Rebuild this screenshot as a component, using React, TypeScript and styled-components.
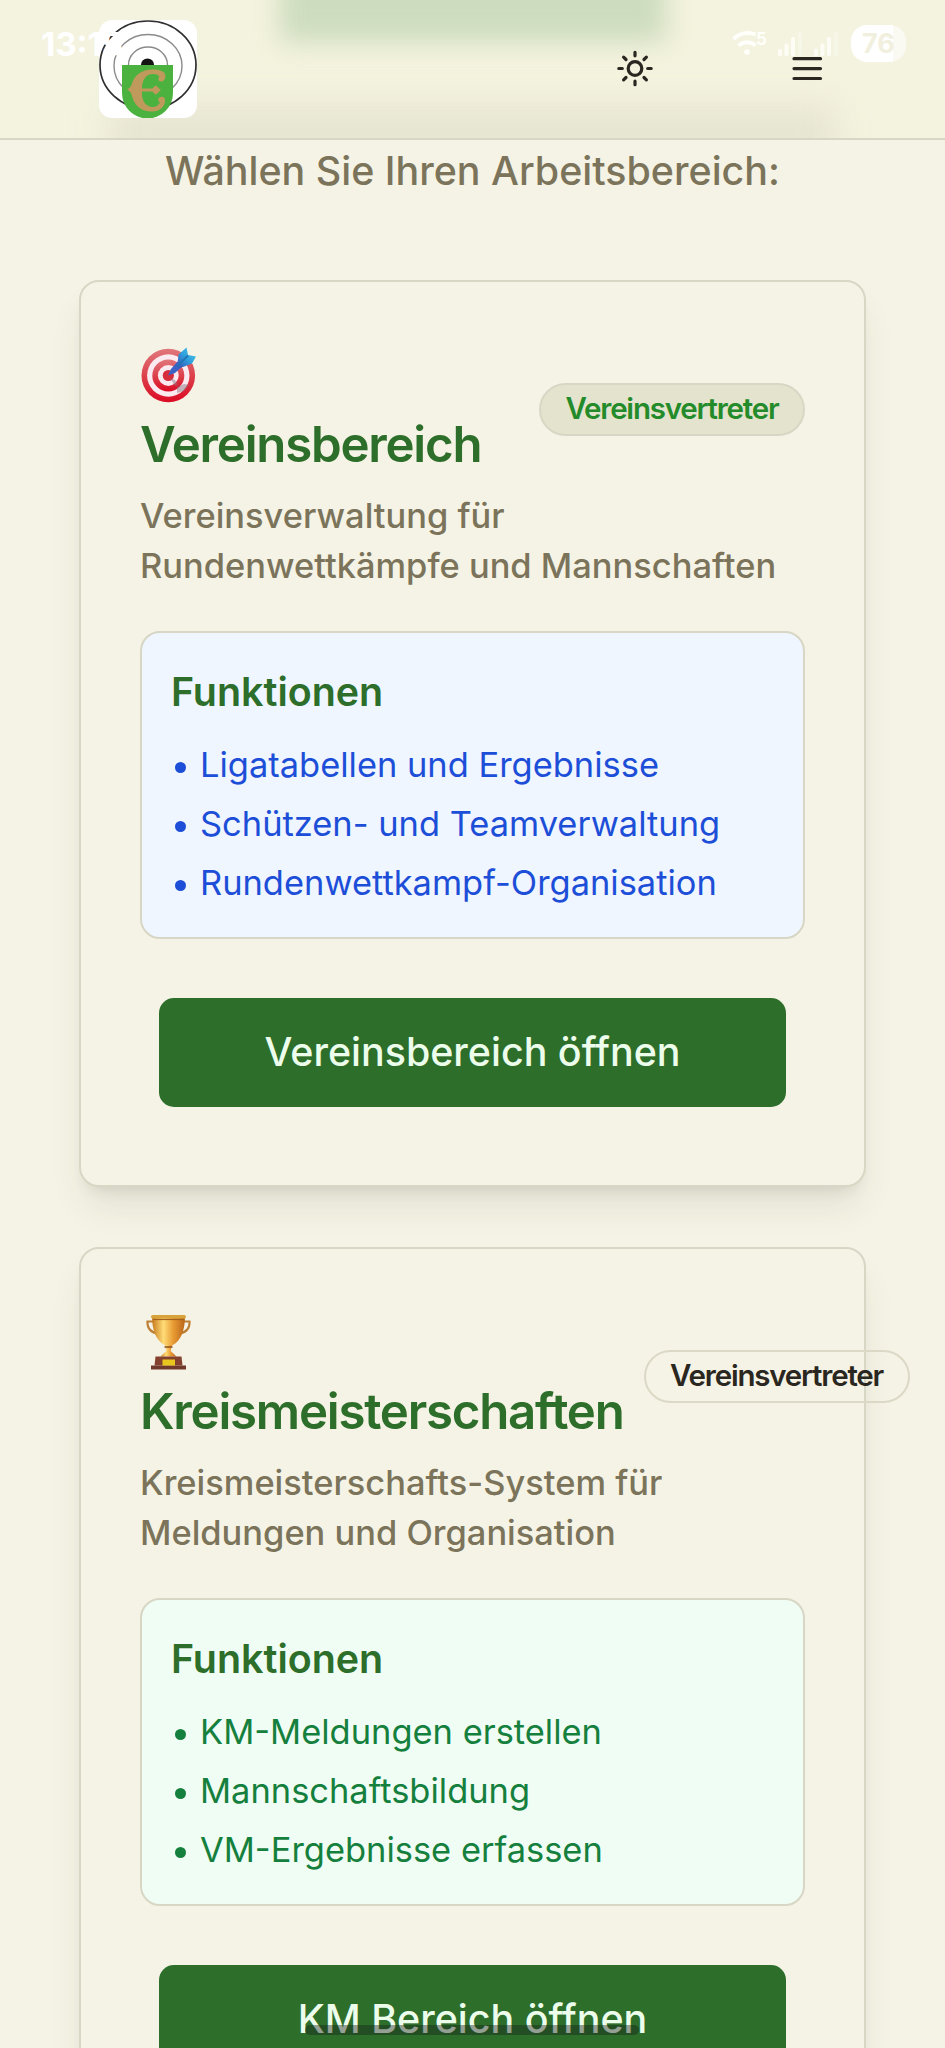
import React from "react";
import styled, { createGlobalStyle } from "styled-components";

const Global = createGlobalStyle`
  * { box-sizing: border-box; }
  html, body { margin: 0; padding: 0; }
  body {
    background: #f5f3e5;
    font-family: Inter, "Liberation Sans", sans-serif;
    font-optical-sizing: none;
    height: 2048px;
    overflow: hidden;
  }
  h2, h3, p, ul { margin: 0; padding: 0; }
`;

const Screen = styled.div`
  position: relative;
  width: 945px;
  height: 2048px;
  overflow: hidden;
  background: #f5f3e5;
`;

const Header = styled.header`
  position: relative;
  height: 140px;
  overflow: hidden;
  border-bottom: 2px solid #d8d6c4;
  background: #f4f3df;
  display: flex;
  align-items: flex-start;
  padding: 20px 118px 0 99px;
`;

const Haze = styled.div<{ $x: number; $y: number; $w: number; $h: number; $c: string; $blur: number }>`
  position: absolute;
  left: ${(p) => p.$x}px;
  top: ${(p) => p.$y}px;
  width: ${(p) => p.$w}px;
  height: ${(p) => p.$h}px;
  background: ${(p) => p.$c};
  filter: blur(${(p) => p.$blur}px);
`;

const Logo = styled.svg`
  position: relative;
  width: 98px;
  height: 98px;
  flex: none;
`;

const Actions = styled.nav`
  position: relative;
  margin-left: auto;
  display: flex;
  gap: 132px;
  padding-top: 28px;
`;

const IconButton = styled.button`
  width: 40px;
  height: 40px;
  padding: 0;
  border: 0;
  background: none;
  color: #292720;
  svg { display: block; }
`;

const StatusBar = styled.div`
  position: absolute;
  z-index: 2;
  top: 0;
  left: 0;
  width: 945px;
  padding: 25px 39px 0 41px;
  display: flex;
  justify-content: space-between;
  color: #fff;
`;

const Clock = styled.span`
  margin-top: -1px;
  font-size: 33px;
  line-height: 40px;
  font-weight: 700;
`;

const StatusIcons = styled.div`
  display: flex;
  align-items: flex-start;
`;

const Signals = styled.div`
  display: flex;
  gap: 12px;
`;

const Battery = styled.span`
  width: 55px;
  height: 37px;
  margin-left: 13px;
  border-radius: 16px;
  background: linear-gradient(90deg, #fff 76%, #fbfaf2 76%);
  color: #f1f0de;
  font-size: 27px;
  line-height: 38px;
  font-weight: 700;
  text-align: center;
`;

const Intro = styled.p`
  margin-top: 3px;
  height: 56px;
  line-height: 56px;
  text-align: center;
  font-size: 39.4px;
  font-weight: 500;
  color: #7b745b;
`;

const Main = styled.main`
  padding: 81px 79px 0;
  display: flex;
  flex-direction: column;
  gap: 60px;
`;

const Card = styled.section`
  flex: none;
  height: 907px;
  border: 2px solid #d8d6c4;
  border-radius: 20px;
  background: #f5f3e5;
  padding: 59px 59px 0;
  box-shadow: 0 24px 36px -7px rgba(60, 56, 40, 0.1), 0 10px 15px -9px rgba(60, 56, 40, 0.14);
`;

const CardHead = styled.div`
  display: flex;
  align-items: center;
  justify-content: space-between;
  gap: 20px;
  height: 137px;
`;

const Title = styled.h2`
  color: #2c6e2a;
  font-size: 49.2px;
  line-height: 68px;
  font-weight: 600;
  letter-spacing: -0.025em;
  height: 137px;
  svg { display: block; margin: 6px 0 7px 1px; }
`;

const Badge = styled.span<{ $filled?: boolean }>`
  flex: none;
  height: 53px;
  width: 266px;
  border: 2px solid ${(p) => (p.$filled ? "#d8d6c4" : "#dbd8c6")};
  border-radius: 27px;
  background: ${(p) => (p.$filled ? "#e4e3cd" : "transparent")};
  color: ${(p) => (p.$filled ? "#238b2a" : "#292720")};
  font-size: 29.5px;
  line-height: 47px;
  font-weight: 600;
  letter-spacing: -0.041em;
  text-align: center;
`;

const Description = styled.p`
  margin-top: 13px;
  font-size: 34.45px;
  line-height: 50px;
  font-weight: 500;
  color: #7b745b;
`;

const Features = styled.div<{ $tone: "blue" | "green" }>`
  margin-top: 40px;
  height: 308px;
  border: 2px solid #d8d6c4;
  border-radius: 20px;
  padding: 29px 29px;
  background: ${(p) => (p.$tone === "blue" ? "#eff6ff" : "#f0fdf4")};
  color: ${(p) => (p.$tone === "blue" ? "#1d4ed8" : "#15803d")};
`;

const FeaturesTitle = styled.h3`
  font-size: 39.4px;
  line-height: 60px;
  font-weight: 600;
  color: #2c6e2a;
`;

const List = styled.ul`
  list-style: none;
  margin-top: 13px;
`;

const Item = styled.li`
  display: flex;
  align-items: center;
  height: 59px;
  font-size: 34.45px;
  line-height: 59px;
  font-weight: 400;
  white-space: nowrap;
  &::before {
    content: "";
    width: 11px;
    height: 11px;
    margin: 6px 14px 0 4px;
    border-radius: 50%;
    background: currentColor;
  }
`;

const OpenButton = styled.button`
  display: block;
  width: 627px;
  height: 109px;
  margin: 59px auto 0;
  border: 0;
  border-radius: 15px;
  background: #2c6e2a;
  color: #ecfdec;
  font: 500 39.4px/109px Inter, "Liberation Sans", sans-serif;
  padding: 0;
`;

const HomeIndicator = styled.div`
  position: absolute;
  left: 305px;
  top: 2025px;
  width: 334px;
  height: 10px;
  border-radius: 5px;
  background: rgba(25, 30, 25, 0.42);
`;

const TargetIcon = () => (
  <svg width="56" height="56" viewBox="0 0 56 56">
    <defs>
      <linearGradient id="tRed" x1="0" y1="0" x2="0" y2="1">
        <stop offset="0" stopColor="#e0777b" />
        <stop offset=".55" stopColor="#dc3c48" />
        <stop offset="1" stopColor="#dc0a24" />
      </linearGradient>
      <linearGradient id="tDart" x1="1" y1="0" x2="0" y2="1">
        <stop offset="0" stopColor="#45d0ea" />
        <stop offset=".55" stopColor="#2f9bdc" />
        <stop offset="1" stopColor="#3a50b4" />
      </linearGradient>
    </defs>
    <circle cx="27.3" cy="28.500" r="26.800" fill="url(#tRed)" />
    <circle cx="27.3" cy="28.500" r="21.200" fill="#fbeaf0" />
    <circle cx="27.3" cy="28.500" r="16" fill="url(#tRed)" />
    <circle cx="27.3" cy="28.500" r="10.400" fill="#fbeaf0" />
    <circle cx="27.3" cy="28.500" r="5.600" fill="#d62c3c" />
    <path d="M29 31l5 2 3 5-3 1zM36 40l7-3 5 1-5 6-7 2z" fill="#8b7680" opacity=".5" />
    <path d="M27 28.500L30 22l8-9 5 5-9 8z" fill="#3b62c4" />
    <path d="M36.500 17L37.500 7.500 45.500 .5l1.500 7.500 8 1.500-4 7-9 3.500-4.500.5z" fill="url(#tDart)" />
    <path d="M36 19.500L47 8.500" stroke="#2176b4" strokeWidth="1.800" />
  </svg>
);

const TrophyIcon = () => (
  <svg width="56" height="56" viewBox="0 0 56 56">
    <defs>
      <linearGradient id="cup" x1="0" y1="0" x2="1" y2="0">
        <stop offset="0" stopColor="#c77a1c" />
        <stop offset=".35" stopColor="#ffdc78" />
        <stop offset=".65" stopColor="#e89a32" />
        <stop offset="1" stopColor="#b9661a" />
      </linearGradient>
    </defs>
    <path d="M13 7.500H6.500C6 15 11 19 17 19.500M41 7.500h7.500C49 15 44 19 38 19.500" fill="none" stroke="#bd7e35" strokeWidth="2.200" />
    <path d="M11 2h33c0 13-3.500 25-13 29.500h-6.500C14.500 27 11 15 11 2z" fill="url(#cup)" />
    <rect x="10" y="1" width="35" height="3.600" rx="1.800" fill="#d9a33c" />
    <path d="M12 5.500h31" stroke="#a2621c" strokeWidth="1.200" />
    <path d="M24 31h7l-1.300 6 5.800 5.500H19.500l5.800-5.500z" fill="url(#cup)" />
    <path d="M23.500 33h8" stroke="#8d4d18" strokeWidth="1.500" />
    <path d="M14.500 42.500h26l1 9h-28z" fill="#84422e" />
    <path d="M10 51.500h35v4H10z" fill="#71392b" />
    <rect x="21.500" y="45.500" width="12.500" height="6" fill="#e9c61e" />
  </svg>
);

const LogoMark = () => (
  <Logo viewBox="0 0 98 98">
    <rect width="98" height="98" rx="13" fill="#fff" />
    <ellipse cx="49" cy="45" rx="48" ry="44" fill="none" stroke="#303030" strokeWidth="1.700" />
    <ellipse cx="49" cy="46" rx="34" ry="31.500" fill="none" stroke="#8b8b8b" strokeWidth="1.400" />
    <ellipse cx="49" cy="45" rx="19.500" ry="18" fill="none" stroke="#8b8b8b" strokeWidth="1.400" />
    <circle cx="48.500" cy="45" r="6.600" fill="#141414" />
    <path d="M23 45h51v28a25.500 25.500 0 0 1-51 0z" fill="#4bb13f" />
    <path
      d="M66 54c-1-3-6-4.500-12-4.500-12 0-19 6-21.500 15.500-1 2-2.500 3.500-4.500 4.500 2.500 1 4 3 4.800 5.500C35 85.500 42 91.500 53 91.500c8 0 13-5 13-11 0-3-2-4.500-4.500-3.500-3 1-3 4-.5 5.500-2 3.500-5 5-8.500 4.500-7-1-10-8-9.500-15.500h10c1.500 0 2 3 4 3 1.500-.5 2.500-3 5-4.500-2.500-1.500-3.500-4-5-4.500-2 0-2.500 3-4 3H43c0-8 3.500-14 10-14.500 4-.3 6.500 1 7.500 3-2 1.500-1.500 4 1 4.500 3 .6 6-3 4.500-7z"
      fill="#c09a5c"
    />
  </Logo>
);

const SunIcon = () => (
  <svg width="40" height="40" viewBox="0 0 40 40" fill="none" stroke="currentColor" strokeWidth="3.200" strokeLinecap="round">
    <circle cx="20" cy="20.500" r="6.800" />
    <path d="M20 4.300v3.500M20 33.200v3.500M3.800 20.500h3.500M32.700 20.500h3.500M8.600 9.100l2.400 2.400M29 29.500l2.400 2.400M8.600 31.900l2.400-2.400M29 11.500l2.400-2.400" />
  </svg>
);

const MenuIcon = () => (
  <svg width="40" height="40" viewBox="0 0 40 40" stroke="currentColor" strokeWidth="3.200" strokeLinecap="round">
    <path d="M7 10.700h26.500M7 20.600h26.500M7 30.500h26.500" />
  </svg>
);

const WifiIcon = () => (
  <svg width="46" height="32" viewBox="0 0 46 32" fill="none" stroke="#fffffb">
    <path d="M1.500 14a20 20 0 0 1 22-4.500M6.500 20.500a12.500 12.500 0 0 1 17 0" strokeWidth="4" />
    <circle cx="15" cy="27" r="2.800" fill="#fffffb" stroke="none" />
    <text x="24" y="19.500" fontSize="17" fontWeight="700" fill="#fffffb" stroke="none">5</text>
  </svg>
);

const SignalIcon = () => (
  <svg width="24" height="32" viewBox="0 0 24 32" fill="#fdfdf6">
    <rect x="0" y="24" width="4" height="7" rx="1.500" />
    <rect x="6.500" y="18.500" width="4" height="12.500" rx="1.500" />
    <rect x="13" y="12" width="4" height="19" rx="1.500" />
    <rect x="20" y="7" width="4" height="24" rx="1.500" opacity=".4" />
  </svg>
);

interface AreaProps {
  icon: React.ReactNode;
  title: string;
  lines: string[];
  tone: "blue" | "green";
  features: string[];
  action: string;
  filled?: boolean;
}

const AreaCard = ({ icon, title, lines, tone, features, action, filled }: AreaProps) => (
  <Card>
    <CardHead>
      <Title>
        {icon}
        {title}
      </Title>
      <Badge $filled={filled}>Vereinsvertreter</Badge>
    </CardHead>
    <Description>
      {lines[0]}
      <br />
      {lines[1]}
    </Description>
    <Features $tone={tone}>
      <FeaturesTitle>Funktionen</FeaturesTitle>
      <List>
        {features.map((f) => (
          <Item key={f}>{f}</Item>
        ))}
      </List>
    </Features>
    <OpenButton>{action}</OpenButton>
  </Card>
);

export default function App() {
  return (
    <Screen>
      <Global />
      <Header>
        <Haze $x={280} $y={-40} $w={386} $h={82} $c="#cddcbe" $blur={13} />
        <Haze $x={110} $y={106} $w={725} $h={60} $c="#e6e5d2" $blur={16} />
        <LogoMark />
        <Actions>
          <IconButton aria-label="Design">
            <SunIcon />
          </IconButton>
          <IconButton aria-label="Menü">
            <MenuIcon />
          </IconButton>
        </Actions>
      </Header>
      <StatusBar>
        <Clock>13:15</Clock>
        <StatusIcons>
          <WifiIcon />
          <Signals>
            <SignalIcon />
            <SignalIcon />
          </Signals>
          <Battery>76</Battery>
        </StatusIcons>
      </StatusBar>
      <Intro>Wählen Sie Ihren Arbeitsbereich:</Intro>
      <Main>
        <AreaCard
          filled
          icon={<TargetIcon />}
          title="Vereinsbereich"
          lines={["Vereinsverwaltung für", "Rundenwettkämpfe und Mannschaften"]}
          tone="blue"
          features={["Ligatabellen und Ergebnisse", "Schützen- und Teamverwaltung", "Rundenwettkampf-Organisation"]}
          action="Vereinsbereich öffnen"
        />
        <AreaCard
          icon={<TrophyIcon />}
          title="Kreismeisterschaften"
          lines={["Kreismeisterschafts-System für", "Meldungen und Organisation"]}
          tone="green"
          features={["KM-Meldungen erstellen", "Mannschaftsbildung", "VM-Ergebnisse erfassen"]}
          action="KM Bereich öffnen"
        />
      </Main>
      <HomeIndicator />
    </Screen>
  );
}
